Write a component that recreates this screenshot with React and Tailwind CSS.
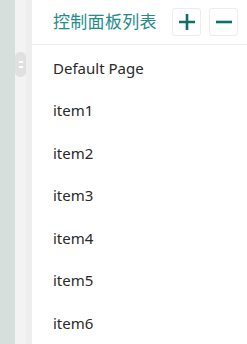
import React from 'react';

const items = ['Default Page', 'item1', 'item2', 'item3', 'item4', 'item5', 'item6'];

export default function App() {
  return (
    <div className="flex h-[344px] w-[247px] overflow-hidden bg-white" style={{ fontFamily: '"Noto Sans", "Noto Sans CJK SC", sans-serif' }}>
      {/* left rail */}
      <div className="w-[15px] shrink-0 bg-[#d7dfdd]" />
      <div className="relative w-[11px] shrink-0 bg-[#f3f3f3]">
        <div className="absolute left-0 top-[52px] flex h-[25px] w-[11px] flex-col items-center justify-center gap-[3px] rounded-[5px] bg-[#e0e0e0]">
          <span className="h-[2px] w-[4px] bg-white" />
          <span className="h-[2px] w-[4px] bg-white" />
        </div>
      </div>
      <div className="w-[6px] shrink-0 bg-[#eeeeee]" />

      <div className="flex min-w-0 flex-1 flex-col">
        <div className="flex h-[47px] items-center border-b border-[#ececec] pl-[21px] pr-[9px]">
          <span className="text-[17px] tracking-[0.3px] text-[#268b8b]">控制面板列表</span>
          <div className="ml-auto flex gap-[8px]">
            <button className="flex h-[28px] w-[29px] items-center justify-center rounded-[3px] border border-[#ececec] bg-white">
              <svg width="18" height="18" viewBox="0 0 18 18">
                <path d="M9 1v16M1 9h16" stroke="#0f6f66" strokeWidth="2.6" />
              </svg>
            </button>
            <button className="flex h-[28px] w-[29px] items-center justify-center rounded-[3px] border border-[#ececec] bg-white">
              <svg width="18" height="18" viewBox="0 0 18 18">
                <path d="M1 9h16" stroke="#0f6f66" strokeWidth="2.6" />
              </svg>
            </button>
          </div>
        </div>
        <ul className="flex flex-col pt-[2px]">
          {items.map((it) => (
            <li key={it} className="flex h-[42.5px] items-center pl-[21px] text-[15px] text-[#2a2a2a]">
              {it}
            </li>
          ))}
        </ul>
      </div>
    </div>
  );
}
